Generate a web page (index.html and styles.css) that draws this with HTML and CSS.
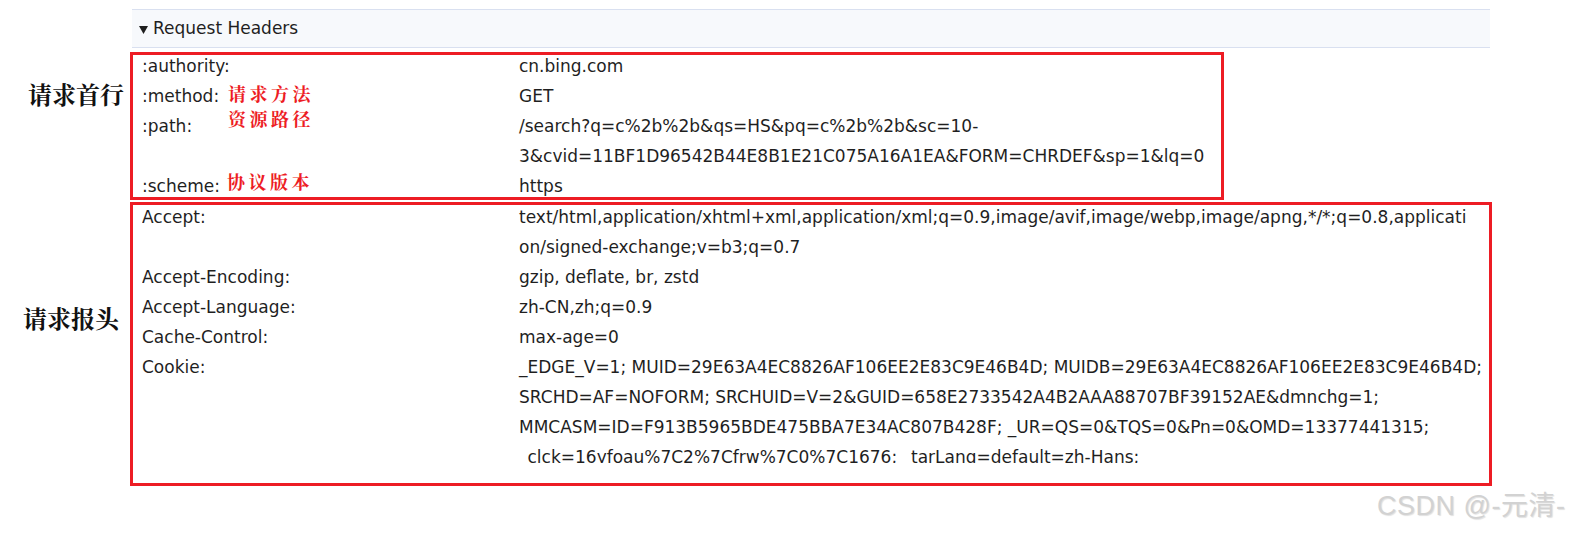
FILE: index.html
```html
<!DOCTYPE html>
<html lang="zh-CN">
<head>
<meta charset="utf-8">
<title>Request Headers</title>
<link rel="stylesheet" href="styles.css">
</head>
<body>
<div class="page">
  <div class="header">
    <svg class="caret" width="9" height="8" viewBox="0 0 9 8"><polygon points="0,0 9,0 4.5,8" fill="#1f1f1f"/></svg>
    <span>Request Headers</span>
  </div>

  <section class="sec sec1">
    <div class="label label1">请求首行</div>
    <div class="box box1">
      <div class="rows rows1">
        <div class="row"><div class="k">:authority:</div><div class="v">cn.bing.com</div></div>
        <div class="row"><div class="k">:method:</div><div class="v">GET</div></div>
        <div class="row"><div class="k">:path:</div><div class="v">/search?q=c%2b%2b&amp;qs=HS&amp;pq=c%2b%2b&amp;sc=10-<br>3&amp;cvid=11BF1D96542B44E8B1E21C075A16A1EA&amp;FORM=CHRDEF&amp;sp=1&amp;lq=0</div></div>
        <div class="row"><div class="k">:scheme:</div><div class="v">https</div></div>
      </div>
      <span class="note note-method">请求方法</span>
      <span class="note note-path">资源路径</span>
      <span class="note note-scheme">协议版本</span>
    </div>
  </section>

  <section class="sec sec2">
    <div class="label label2">请求报头</div>
    <div class="box box2">
      <div class="rows rows2">
        <div class="row"><div class="k">Accept:</div><div class="v">text/html,application/xhtml+xml,application/xml;q=0.9,image/avif,image/webp,image/apng,*/*;q=0.8,applicati<br>on/signed-exchange;v=b3;q=0.7</div></div>
        <div class="row"><div class="k">Accept-Encoding:</div><div class="v">gzip, deflate, br, zstd</div></div>
        <div class="row"><div class="k">Accept-Language:</div><div class="v">zh-CN,zh;q=0.9</div></div>
        <div class="row"><div class="k">Cache-Control:</div><div class="v">max-age=0</div></div>
        <div class="row"><div class="k">Cookie:</div><div class="v">_EDGE_V=1; MUID=29E63A4EC8826AF106EE2E83C9E46B4D; MUIDB=29E63A4EC8826AF106EE2E83C9E46B4D;<br>SRCHD=AF=NOFORM; SRCHUID=V=2&amp;GUID=658E2733542A4B2AAA88707BF39152AE&amp;dmnchg=1;<br>MMCASM=ID=F913B5965BDE475BBA7E34AC807B428F; _UR=QS=0&amp;TQS=0&amp;Pn=0&amp;OMD=13377441315;<br>_clck=16yfoau%7C2%7Cfrw%7C0%7C1676; _tarLang=default=zh-Hans;</div></div>
      </div>
    </div>
  </section>

  <div class="watermark">CSDN @-元清-</div>
</div>
</body>
</html>
```
FILE: styles.css
```css
html, body {
  margin: 0;
  padding: 0;
  background: #ffffff;
}
body {
  width: 1571px;
  height: 534px;
  overflow: hidden;
  font-family: "DejaVu Sans", "Noto Sans CJK SC", sans-serif;
  color: #1f1f1f;
}
.page {
  position: relative;
  padding-top: 9px;
  height: 534px;
  box-sizing: border-box;
}
.header {
  margin-left: 132px;
  width: 1358px;
  height: 39px;
  box-sizing: border-box;
  border-top: 1px solid #d9e0f0;
  border-bottom: 1px solid #d9e0f0;
  background: #f7f9fc;
  display: flex;
  align-items: center;
  padding-left: 7px;
  font-size: 17px;
  line-height: 37px;
}
.caret {
  display: block;
  margin-right: 5px;
  margin-top: 2px;
}
.sec {
  display: flex;
  align-items: flex-start;
}
.sec1 { margin-top: 4px; }
.sec2 { margin-top: 2px; }
.label {
  width: 130px;
  flex: none;
  box-sizing: border-box;
  font-family: "Noto Serif CJK SC", "Noto Sans CJK SC", serif;
  font-weight: 700;
  font-size: 24px;
  line-height: 24px;
  color: #111111;
}
.label1 { padding-left: 28px; margin-top: 30px; }
.label2 { padding-left: 23px; margin-top: 104px; }
.box {
  position: relative;
  flex: none;
  box-sizing: border-box;
  border: 3px solid #ed1c24;
  padding-left: 9px;
}
.box1 { width: 1094px; height: 148px; }
.box2 { width: 1362px; height: 284px; }
.rows {
  font-size: 17px;
  line-height: 30px;
}
.rows1 { margin-top: -4px; }
.rows2 {
  margin-top: -3px;
  height: 261px;
  overflow: hidden;
}
.row {
  display: flex;
}
.k {
  width: 377px;
  flex: none;
  white-space: nowrap;
}
.v {
  white-space: nowrap;
}
.note {
  position: absolute;
  font-family: "Noto Serif CJK SC", "Noto Sans CJK SC", serif;
  font-weight: 700;
  font-size: 18px;
  line-height: 18px;
  letter-spacing: 3.5px;
  color: #ed1c24;
  white-space: nowrap;
}
.note-method { left: 95px; top: 29px; }
.note-path { left: 95px; top: 54px; }
.note-scheme { left: 94px; top: 117px; }
.watermark {
  position: absolute;
  left: 1377px;
  top: 493px;
  font-family: "Liberation Sans", "Noto Sans CJK SC", sans-serif;
  font-size: 27px;
  line-height: 27px;
  letter-spacing: 0.5px;
  color: #d2d2d2;
  text-shadow: 1px 1px 1px rgba(0, 0, 0, 0.12);
  white-space: nowrap;
}
```
